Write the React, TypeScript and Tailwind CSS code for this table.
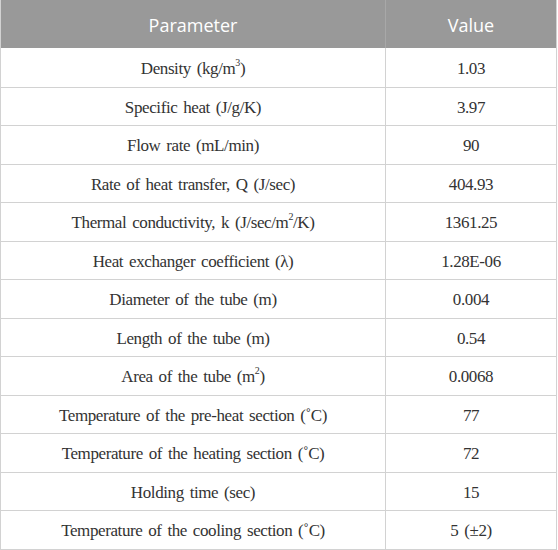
import React from 'react';

type Row = { param: React.ReactNode; value: string };

const Sup: React.FC<{ children: React.ReactNode }> = ({ children }) => (
  <sup className="relative -top-[1px] text-[10px] align-super leading-none">{children}</sup>
);

const rows: Row[] = [
  { param: <>Density (kg/m<Sup>3</Sup>)</>, value: '1.03' },
  { param: 'Specific heat (J/g/K)', value: '3.97' },
  { param: 'Flow rate (mL/min)', value: '90' },
  { param: 'Rate of heat transfer, Q (J/sec)', value: '404.93' },
  { param: <>Thermal conductivity, k (J/sec/m<Sup>2</Sup>/K)</>, value: '1361.25' },
  { param: 'Heat exchanger coefficient (λ)', value: '1.28E-06' },
  { param: 'Diameter of the tube (m)', value: '0.004' },
  { param: 'Length of the tube (m)', value: '0.54' },
  { param: <>Area of the tube (m<Sup>2</Sup>)</>, value: '0.0068' },
  { param: 'Temperature of the pre-heat section (˚C)', value: '77' },
  { param: 'Temperature of the heating section (˚C)', value: '72' },
  { param: 'Holding time (sec)', value: '15' },
  { param: 'Temperature of the cooling section (˚C)', value: '5 (±2)' },
];

const App: React.FC = () => {
  return (
    <div className="w-[558px] h-[550px] bg-white overflow-hidden">
      <div className="w-[557px] border-x border-b border-[#d2d2d2]">
        {/* Header */}
        <div
          className="flex h-[48px] bg-[#999999] text-white text-[18px]"
          style={{ fontFamily: '"Open Sans", "Noto Sans", sans-serif' }}
        >
          <div className="w-[385px] flex items-center justify-center pt-[3px] border-r border-[#a8a8a8]">Parameter</div>
          <div className="flex-1 flex items-center justify-center pt-[3px]">Value</div>
        </div>

        {/* Body */}
        {rows.map((row, i) => (
          <div
            key={i}
            className={`flex h-[38.5px] text-[17px] tracking-[-0.4px] text-[#333333] ${i > 0 ? 'border-t border-[#d2d2d2]' : ''}`}
            style={{ fontFamily: '"Liberation Serif", "DejaVu Serif", serif', wordSpacing: '2px' }}
          >
            <div className="w-[385px] flex items-center justify-center pt-[2px] border-r border-[#d2d2d2]">
              <span>{row.param}</span>
            </div>
            <div className="flex-1 flex items-center justify-center pt-[2px]">{row.value}</div>
          </div>
        ))}
      </div>
    </div>
  );
};

export default App;
